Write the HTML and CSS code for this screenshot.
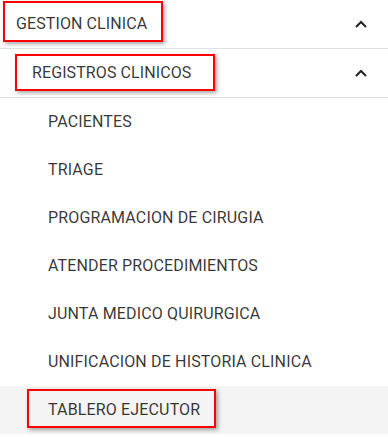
FILE: index.html
```html
<!DOCTYPE html>
<html lang="es">
<head>
    <meta charset="UTF-8">
    <meta name="viewport" content="width=device-width, initial-scale=1.0">
    <title>Gestion Clinica</title>
    <link rel="stylesheet" href="styles.css">
</head>
<body>
    <nav class="side-menu">
        <div class="group-head level-1">
            <span class="label">GESTION CLINICA</span>
            <span class="mark mark-1"></span>
            <svg class="chevron" viewBox="0 0 12 8"><path d="M1 7 L6 2 L11 7" /></svg>
        </div>
        <div class="group-head level-2">
            <span class="label">REGISTROS CLINICOS</span>
            <span class="mark mark-2"></span>
            <svg class="chevron" viewBox="0 0 12 8"><path d="M1 7 L6 2 L11 7" /></svg>
        </div>
        <div class="items">
            <a href="#">PACIENTES</a>
            <a href="#">TRIAGE</a>
            <a href="#">PROGRAMACION DE CIRUGIA</a>
            <a href="#">ATENDER PROCEDIMIENTOS</a>
            <a href="#">JUNTA MEDICO QUIRURGICA</a>
            <a href="#">UNIFICACION DE HISTORIA CLINICA</a>
            <a href="#" class="active">TABLERO EJECUTOR<span class="mark mark-3"></span></a>
        </div>
    </nav>
</body>
</html>
```

FILE: styles.css
```css
body {
    font-family: Roboto, "Liberation Sans", Arial, sans-serif;
    margin: 0;
    padding: 0;
    background-color: #fff;
    color: rgba(0, 0, 0, 0.8);
}
.side-menu {
    width: 388px;
}
.group-head {
    position: relative;
    display: flex;
    align-items: center;
    justify-content: space-between;
    height: 48px;
    border-bottom: 1px solid #e0e0e0;
    font-size: 16px;
    letter-spacing: 0.1px;
    padding-right: 21px;
}
.level-1 {
    padding-left: 16px;
}
.level-2 {
    padding-left: 32px;
}
.label {
    padding-bottom: 2px;
}
.chevron {
    width: 12px;
    height: 8px;
    fill: none;
    stroke: #222;
    stroke-width: 2;
}
.items a {
    position: relative;
    display: flex;
    align-items: center;
    box-sizing: border-box;
    height: 48px;
    padding-left: 48px;
    padding-bottom: 2px;
    font-size: 16px;
    letter-spacing: 0.15px;
    color: rgba(0, 0, 0, 0.8);
    text-decoration: none;
}
.items a.active {
    background-color: #f4f4f4;
}
/* red outlines drawn over the labels */
.mark {
    position: absolute;
    border: 2px solid #f00;
    box-shadow: 2px 2px 4px rgba(0, 0, 0, 0.35);
    pointer-events: none;
}
.mark-1 {
    left: 3px;
    top: 1px;
    width: 156px;
    height: 37px;
}
.mark-2 {
    left: 15px;
    top: 5px;
    width: 196px;
    height: 33px;
}
.mark-3 {
    left: 27px;
    top: 3px;
    width: 185px;
    height: 35px;
}
```
